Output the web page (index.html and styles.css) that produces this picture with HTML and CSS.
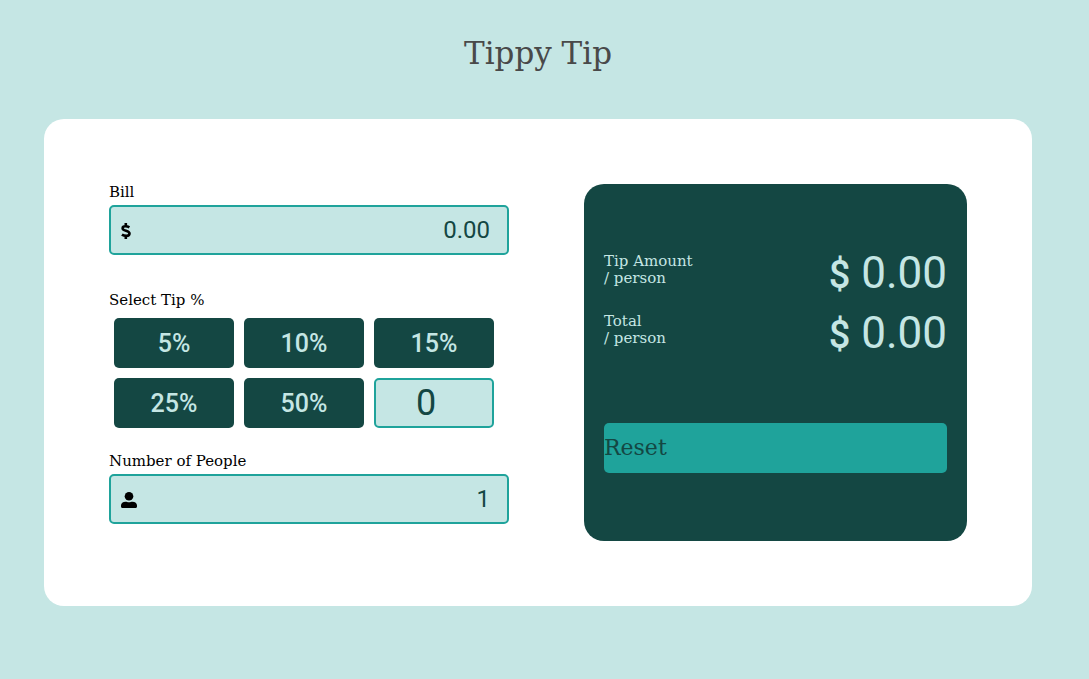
FILE: index.html
```html
<!DOCTYPE html>
<html lang="en">
<head>
  <meta charset="utf-8">
  <meta name="viewport" content="width=device-width, initial-scale=1">
  <title>Tippy Tip</title>
  <link rel="stylesheet" href="styles.css">
</head>
<body>
  <h1 class="title">Tippy Tip</h1>
  <main class="card">
    <form class="form">
      <div class="field">
        <label class="label" for="bill">Bill</label>
        <div class="box">
          <svg class="icon icon-dollar" viewBox="0 0 10 16" aria-hidden="true"><path d="M4.800 0v3M4.800 13v3M8.400 4.300C6.800 3.300 1.600 2.200 1.600 5.200c0 3.100 6.900 2.100 6.900 5.300 0 3.500-5.700 2.400-7.600 1.100" fill="none" stroke="currentColor" stroke-width="2.600"/></svg>
          <input class="input" id="bill" type="text" inputmode="decimal" value="0.00">
        </div>
      </div>
      <fieldset class="tips">
        <legend class="label">Select Tip %</legend>
        <div class="grid">
          <button class="tip" type="button">5%</button>
          <button class="tip" type="button">10%</button>
          <button class="tip" type="button">15%</button>
          <button class="tip" type="button">25%</button>
          <button class="tip" type="button">50%</button>
          <input class="custom" type="text" inputmode="numeric" value="0" aria-label="Custom tip">
        </div>
      </fieldset>
      <div class="field">
        <label class="label" for="people">Number of People</label>
        <div class="box">
          <svg class="icon icon-user" viewBox="0 0 16 16" aria-hidden="true"><circle cx="8" cy="4.300" r="4.300"/><path d="M0 13.600C0 10.900 1.800 9.700 4.600 9.700c1.200 0 1.900.5 3.400.5s2.200-.5 3.400-.5c2.800 0 4.600 1.200 4.600 3.900v.9c0 .9-.6 1.500-1.500 1.500h-13C.6 16 0 15.400 0 14.500z"/></svg>
          <input class="input" id="people" type="text" inputmode="numeric" value="1">
        </div>
      </div>
    </form>
    <section class="results">
      <div class="row">
        <p class="caption">Tip Amount<br>/ person</p>
        <output class="amount"><span class="currency">$</span> 0.00</output>
      </div>
      <div class="row">
        <p class="caption">Total<br>/ person</p>
        <output class="amount"><span class="currency">$</span> 0.00</output>
      </div>
      <button class="reset" type="button">Reset</button>
    </section>
  </main>
</body>
</html>
```
FILE: styles.css
```css
* {
  box-sizing: border-box;
}

body {
  margin: 0;
  padding: 33px 57px 73px 44px;
  background: #c5e6e4;
  color: #000;
  font-family: "DejaVu Serif", serif;
}

.title {
  margin: 0 0 46px;
  color: #494949;
  font-size: 31px;
  font-weight: 400;
  line-height: 40px;
  text-align: center;
}

.card {
  display: flex;
  flex-wrap: wrap;
  gap: 75px;
  padding: 65px;
  border-radius: 20px;
  background: #fff;
}

.form {
  flex: 0 0 400px;
}

.label {
  display: block;
  padding: 0;
  font-size: 15px;
  line-height: 16px;
}

.box {
  display: flex;
  align-items: center;
  height: 50px;
  margin-top: 5px;
  padding: 0 17px 0 10px;
  border: 2px solid #1fa39b;
  border-radius: 5px;
  background: #c5e6e4;
}

.icon {
  flex: none;
  height: 16px;
  margin-top: 2px;
  fill: currentColor;
}

.icon-dollar {
  width: 10px;
}

.icon-user {
  width: 16px;
}

.input,
.custom {
  min-width: 0;
  color: #144743;
  font-family: Roboto, sans-serif;
}

.input {
  flex: 1;
  padding: 0;
  border: 0;
  background: transparent;
  font-size: 24px;
  text-align: right;
}

.tips {
  margin: 37px 0 25px;
  padding: 0;
  border: 0;
}

.grid {
  display: grid;
  grid-template-columns: repeat(3, 120px);
  gap: 10px;
  padding: 10px 5px 0;
}

.tip,
.custom {
  height: 50px;
  border-radius: 5px;
}

.tip {
  padding: 0;
  border: 0;
  background: #144743;
  color: #c5e6e4;
  font-family: Roboto, sans-serif;
  font-size: 25px;
  font-weight: 500;
}

.custom {
  padding: 0 16px 0 0;
  border: 2px solid #1fa39b;
  background: #c5e6e4;
  font-size: 36px;
  text-align: center;
}

.results {
  flex: 1;
  display: flex;
  flex-direction: column;
  justify-content: center;
  gap: 16px;
  min-height: 357px;
  padding: 19px 20px 21px;
  border-radius: 20px;
  background: #144743;
  color: #c5e6e4;
}

.row {
  display: flex;
  align-items: flex-start;
  justify-content: space-between;
  height: 44px;
}

.caption {
  margin: 0;
  padding-top: 2px;
  font-size: 15px;
  line-height: 17px;
}

.amount {
  font-family: Roboto, sans-serif;
  font-size: 44px;
  line-height: 44px;
}

.currency {
  font-size: 38px;
  font-weight: 500;
}

.reset {
  height: 50px;
  margin-top: 52px;
  padding: 0;
  border: 0;
  border-radius: 5px;
  background: #1fa39b;
  color: #144743;
  font-family: "DejaVu Serif", serif;
  font-size: 22px;
  text-align: left;
}
```
